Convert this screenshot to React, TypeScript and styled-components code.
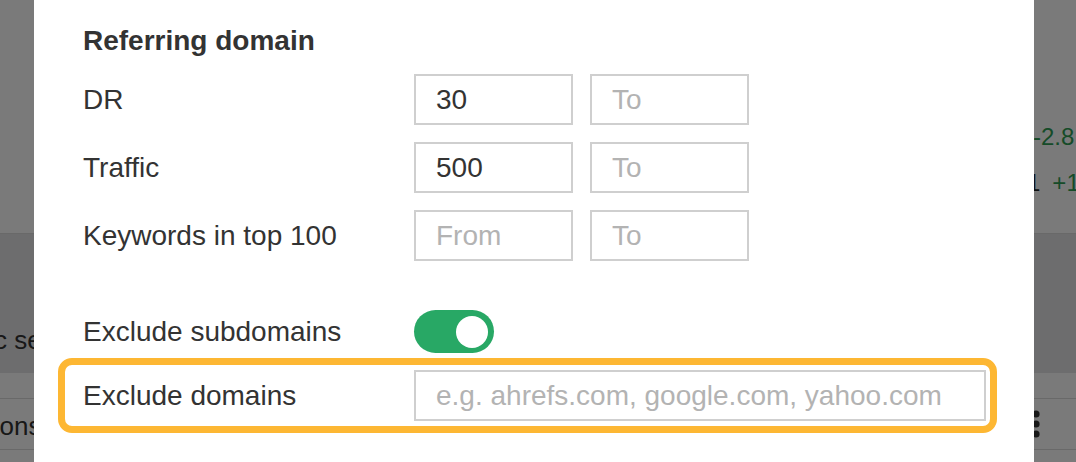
import React from "react";
import styled, { createGlobalStyle } from "styled-components";

const GlobalStyle = createGlobalStyle`
    html, body {
        margin: 0;
        padding: 0;
        overflow: hidden;
    }
    body {
        font-family: "Liberation Sans", Arial, sans-serif;
        color: #333;
    }
`;

const Page = styled.div`
    position: relative;
    width: 1076px;
    height: 462px;
    overflow: hidden;
    background-color: #fff;
`;

/* the app page that sits behind the dialog */
const Backdrop = styled.div`
    display: flex;
    flex-direction: column;
`;

const Band = styled.div<{ $height: number; $bg?: string; $line?: boolean }>`
    display: flex;
    justify-content: space-between;
    align-items: flex-end;
    height: ${props => props.$height}px;
    background-color: ${props => props.$bg || "#fff"};
    border-bottom: ${props => (props.$line ? "1px solid #dcdcdc" : "none")};
    box-sizing: border-box;
    overflow: hidden;
`;

const SideText = styled.div<{ $shift: number; $bottom: number }>`
    font-size: 26px;
    line-height: 30px;
    white-space: nowrap;
    color: #333;
    margin-left: ${props => props.$shift}px;
    padding-bottom: ${props => props.$bottom}px;
`;

const Stats = styled.div`
    align-self: flex-start;
    display: flex;
    flex-direction: column;
    width: 43px;
    padding-top: 114px;
    font-size: 24px;
    line-height: 46px;
    white-space: nowrap;
`;

const Stat = styled.div<{ $shift?: number }>`
    display: flex;
    gap: 12px;
    margin-left: ${props => props.$shift || 0}px;
`;

const Delta = styled.span`
    color: #2f9e55;
`;

const Plain = styled.span`
    color: #222;
`;

const MenuDots = styled.svg`
    align-self: center;
    margin-right: 34px;
`;

const Overlay = styled.div`
    position: absolute;
    inset: 0;
    background-color: rgba(0, 0, 0, 0.52);
`;

const Modal = styled.div`
    position: absolute;
    top: 0;
    left: 34px;
    width: 1000px;
    height: 480px;
    background-color: #fff;
    padding: 25px 49px;
    box-sizing: border-box;
`;

const Heading = styled.h3`
    margin: 0 0 17px;
    font-size: 28px;
    line-height: 32px;
    font-weight: bold;
    color: #333;
`;

const Rows = styled.div`
    display: flex;
    flex-direction: column;
    gap: 17px;
`;

const Row = styled.div`
    display: grid;
    grid-template-columns: 331px auto;
    align-items: center;
`;

const Label = styled.div`
    font-size: 28px;
    line-height: 32px;
    color: #333;
`;

const Range = styled.div`
    display: flex;
    gap: 17px;
`;

const Field = styled.input<{ $width?: number }>`
    width: ${props => props.$width || 159}px;
    height: 51px;
    box-sizing: border-box;
    border: 2px solid #cfcfcf;
    border-radius: 0;
    padding: 0 20px;
    font-family: "Liberation Sans", Arial, sans-serif;
    font-size: 28px;
    color: #333;
    background: #fff;
    outline: none;

    &::placeholder {
        color: #b3b3b3;
    }
`;

const ToggleRow = styled(Row)`
    margin-top: 49px;
`;

const Switch = styled.div<{ $on: boolean }>`
    display: flex;
    align-items: center;
    justify-content: ${props => (props.$on ? "flex-end" : "flex-start")};
    width: 80px;
    height: 43px;
    padding: 0 6px;
    box-sizing: border-box;
    border-radius: 22px;
    background-color: ${props => (props.$on ? "#28a865" : "#ccc")};
`;

const Knob = styled.div`
    width: 32px;
    height: 32px;
    border-radius: 50%;
    background-color: #fff;
`;

const HighlightRow = styled(Row)`
    width: 939px;
    margin: 5px 0 0 -25px;
    padding: 5px 4px 5px 18px;
    box-sizing: border-box;
    border: 7px solid #fdb733;
    border-radius: 14px;
`;

export default function App() {
    return (
        <Page>
            <GlobalStyle />
            <Backdrop>
                <Band $height={234} $line>
                    <span />
                    <Stats>
                        <Stat>
                            <Delta>-2.8</Delta>
                        </Stat>
                        <Stat $shift={-6}>
                            <Plain>1</Plain>
                            <Delta>+1</Delta>
                        </Stat>
                    </Stats>
                </Band>
                <Band $height={139} $bg="#e4e4e5">
                    <SideText $shift={-84} $bottom={18}>Organic search</SideText>
                </Band>
                <Band $height={26} $line>
                    <span />
                </Band>
                <Band $height={51} $line>
                    <SideText $shift={-64} $bottom={8}>Positions</SideText>
                    <MenuDots width="12" height="30" viewBox="0 0 12 30">
                        <circle cx="6" cy="5" r="3.6" fill="#333" />
                        <circle cx="6" cy="15" r="3.6" fill="#333" />
                        <circle cx="6" cy="25" r="3.6" fill="#333" />
                    </MenuDots>
                </Band>
            </Backdrop>
            <Overlay />
            <Modal>
                <Heading>Referring domain</Heading>
                <Rows>
                    <Row>
                        <Label>DR</Label>
                        <Range>
                            <Field defaultValue="30" />
                            <Field placeholder="To" />
                        </Range>
                    </Row>
                    <Row>
                        <Label>Traffic</Label>
                        <Range>
                            <Field defaultValue="500" />
                            <Field placeholder="To" />
                        </Range>
                    </Row>
                    <Row>
                        <Label>Keywords in top 100</Label>
                        <Range>
                            <Field placeholder="From" />
                            <Field placeholder="To" />
                        </Range>
                    </Row>
                </Rows>
                <ToggleRow>
                    <Label>Exclude subdomains</Label>
                    <Switch $on>
                        <Knob />
                    </Switch>
                </ToggleRow>
                <HighlightRow>
                    <Label>Exclude domains</Label>
                    <Field $width={572} placeholder="e.g. ahrefs.com, google.com, yahoo.com" />
                </HighlightRow>
            </Modal>
        </Page>
    );
}
